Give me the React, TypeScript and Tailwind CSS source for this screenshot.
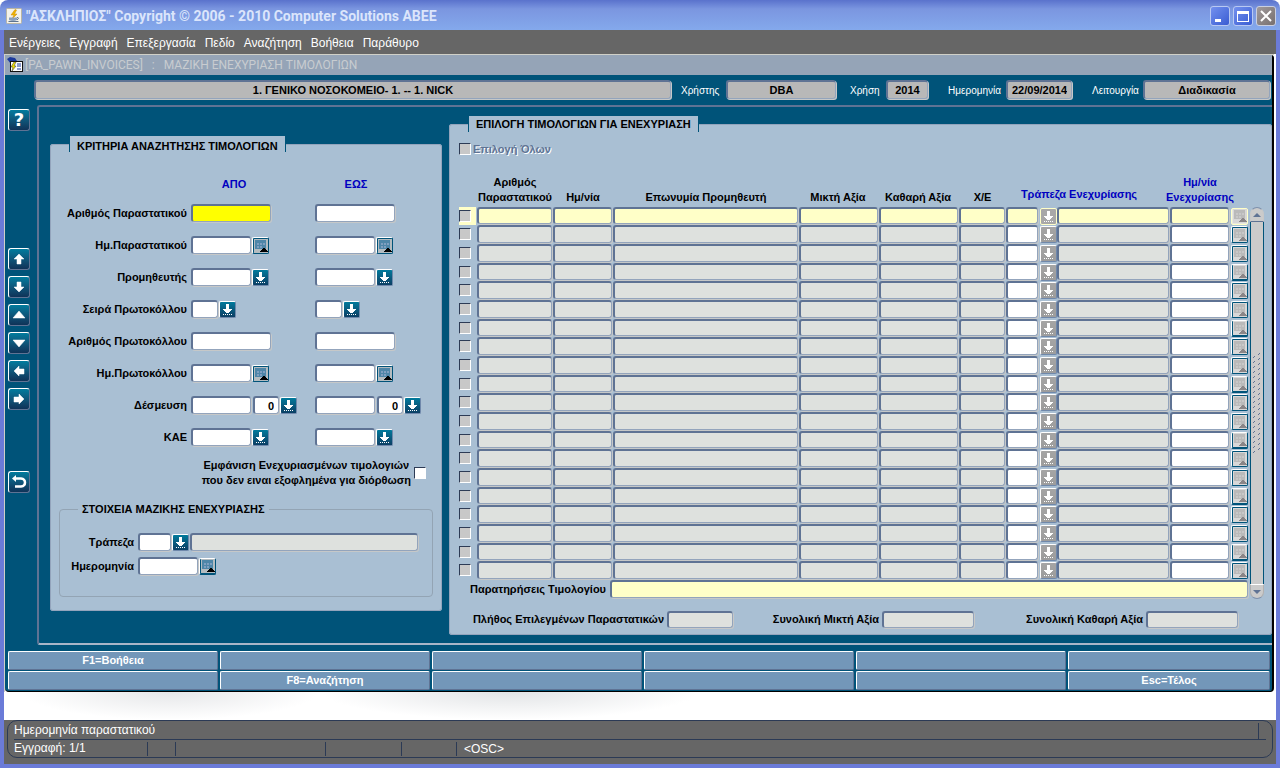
import React, { useState } from 'react';
import clsx from 'clsx';

const ROW_COUNT = 20;

const MENU = ['Ενέργειες', 'Εγγραφή', 'Επεξεργασία', 'Πεδίο', 'Αναζήτηση', 'Βοήθεια', 'Παράθυρο'];

const FUNCTION_KEYS = [
    'F1=Βοήθεια', '', '', '', '', '',
    '', 'F8=Αναζήτηση', '', '', '', 'Esc=Τέλος',
];

type Tone = 'white' | 'active' | 'current' | 'disabled' | 'header';

const TONES: Record<Tone, string> = {
    white: 'bg-white',
    active: 'bg-[#ffff00]',
    current: 'bg-[#ffffc8]',
    disabled: 'bg-[#dee1de]',
    header: 'bg-[#b8b8b8]',
};

interface FieldProps {
    id?: string;
    label?: string;
    tone?: Tone;
    value?: string;
    className?: string;
}

const Field: React.FC<FieldProps> = ({ id, label, tone = 'white', value = '', className }) => (
    <input
        id={id}
        type="text"
        aria-label={label}
        defaultValue={value}
        readOnly={tone === 'disabled' || tone === 'header'}
        className={clsx(
            'mb-px block min-w-0 rounded-[3px] border-2 border-r border-b border-[#5f7394] border-r-[#93a4bc] border-b-[#93a4bc] px-1 font-bold shadow-[1px_1px_0_#c6c8c8] outline-none',
            TONES[tone],
            className
        )}
    />
);

const DownIcon = () => (
    <svg viewBox="0 0 15 15" className="size-[15px]" shapeRendering="crispEdges" aria-hidden="true">
        <path d="M6 2h3v5h3v1h-1v1h-1v1H9v1H6v-1H5V9H4V8H3V7h3z" fill="#fff" />
        <path d="M3 12h1v1H3zM5 12h1v1H5zM7 12h1v1H7zM9 12h1v1H9zM11 12h1v1h-1z" fill="#fff" />
    </svg>
);

const CalendarIcon: React.FC<{ muted?: boolean }> = ({ muted }) => (
    <svg viewBox="0 0 14 14" className="size-[14px]" shapeRendering="crispEdges" aria-hidden="true">
        <rect width="14" height="14" fill={muted ? '#d8d8d8' : '#b4bcc0'} />
        <rect x="1" y="1" width="11" height="9" fill={muted ? '#bababa' : '#4e86a8'} />
        <path
            d="M3 4h2v2H3zM6 4h2v2H6zM9 4h2v2H9zM3 7h2v2H3zM6 7h2v2H6z"
            fill={muted ? '#c8c8c8' : '#7f9fc0'}
        />
        <path d="M9 9h2v1h1v1h1v1h1v1H6v-1h1v-1h1v-1h1z" fill={muted ? '#8a8587' : '#000'} />
    </svg>
);

interface IconButtonProps {
    label: string;
    kind: 'list' | 'date';
    muted?: boolean;
    current?: boolean;
}

const IconButton: React.FC<IconButtonProps> = ({ label, kind, muted, current }) => (
    <button
        type="button"
        aria-label={label}
        className={clsx(
            'flex size-[17px] shrink-0 items-center justify-center rounded-[2px] border border-[#6f88ab]',
            !current && 'border-t-white border-l-white',
            kind === 'list' && !muted && 'bg-linear-to-b from-[#007a9c] to-[#0b3f64]',
            kind === 'list' && muted && !current && 'bg-linear-to-b from-[#a5a5a5] to-[#9c9c9c]',
            kind === 'list' && current && 'border-[#ffffc8] bg-[#a8a8a8]',
            kind === 'date' && !current && 'border-r-[#005379] border-b-[#005379] bg-[#005379]',
            kind === 'date' && current && 'border-[#ffffc8] bg-[#e8e8e0]'
        )}
    >
        {kind === 'list' ? <DownIcon /> : <CalendarIcon muted={muted} />}
    </button>
);

interface CheckProps {
    id?: string;
    label?: string;
    enabled?: boolean;
}

const Check: React.FC<CheckProps> = ({ id, label, enabled }) => (
    <input
        id={id}
        type="checkbox"
        aria-label={label}
        disabled={!enabled}
        className={clsx(
            'block size-[12px] shrink-0 appearance-none border border-white border-t-[#2d3b55] border-l-[#2d3b55]',
            enabled ? 'bg-white' : 'bg-[#c8c8c8]'
        )}
    />
);

const TitleBar = () => (
    <header className="flex h-[30px] items-center rounded-t-lg bg-linear-to-b from-[#5a72cc] via-[#7b96e0] via-30% to-[#84a9ec] pt-[2px] pr-1 pl-[6px]">
        <svg viewBox="0 0 16 16" className="size-4" aria-hidden="true">
            <rect x="0.5" y="0.5" width="15" height="15" rx="1" fill="#f4f2ea" stroke="#b9b5a4" />
            <path d="M9 1.500 5 7h3l-2 4 5-5H8.500l2-4z" fill="#f0b400" stroke="#c98a00" strokeWidth="0.5" />
            <path d="M3 9.500h8v2.500q-4 2-8 0z" fill="#8ba0bd" />
            <path d="M11 9.500q3 0 0 2.500M2.500 13.500h10" fill="none" stroke="#5c7390" />
        </svg>
        <h1 className="ml-1 flex-1 font-[Roboto,sans-serif] text-[14px] leading-4 font-bold text-[#dbe5fb]">
            "ΑΣΚΛΗΠΙΟΣ" Copyright © 2006 - 2010 Computer Solutions ABEE
        </h1>
        <div className="flex gap-[3px]">
            <button type="button" aria-label="Minimize" className="size-5 rounded-[3px] border border-[#b9c9f2] bg-linear-to-br from-[#7390ee] to-[#3a5cd2]">
                <svg viewBox="0 0 18 18" className="size-full" aria-hidden="true"><path d="M4 12h6v3H4z" fill="#fff" /></svg>
            </button>
            <button type="button" aria-label="Maximize" className="size-5 rounded-[3px] border border-[#b9c9f2] bg-linear-to-br from-[#7390ee] to-[#3a5cd2]">
                <svg viewBox="0 0 18 18" className="size-full" aria-hidden="true">
                    <path d="M3 4h12v11H3zM4 7v7h10V7z" fill="#fff" fillRule="evenodd" />
                </svg>
            </button>
            <button type="button" aria-label="Close" className="size-5 rounded-[3px] border border-[#c9cfe0] bg-linear-to-br from-[#a09a9c] to-[#77706f]">
                <svg viewBox="0 0 18 18" className="size-full" aria-hidden="true"><path d="M4 4l10 10M14 4 4 14" stroke="#fff" strokeWidth="2" /></svg>
            </button>
        </div>
    </header>
);

const SIDE_BUTTONS = [
    { label: 'Προηγούμενη εγγραφή', path: 'M10 5l5 5h-3v5H8v-5H5z' },
    { label: 'Επόμενη εγγραφή', path: 'M8 5h4v5h3l-5 5-5-5h3z' },
    { label: 'Προηγούμενη σελίδα', path: 'M10 6l6 7H4z' },
    { label: 'Επόμενη σελίδα', path: 'M4 7h12l-6 7z' },
    { label: 'Αριστερά', path: 'M5 10l5-5v3h5v5h-5v2z' },
    { label: 'Δεξιά', path: 'M15 10l-5-5v3H5v5h5v2z' },
];

const SIDE_BUTTON_CLASS =
    'flex size-[22px] items-center justify-center rounded-[3px] border border-[#5f7394] border-t-white border-l-white bg-linear-to-b from-[#007c9e] to-[#0f3358]';

const SideBar = () => (
    <nav className="flex w-[32px] shrink-0 flex-col pt-[4px] pl-[3px]">
        <button type="button" aria-label="Βοήθεια" className={SIDE_BUTTON_CLASS}>
            <span className="font-['DejaVu_Sans',sans-serif] text-[18px] leading-5 font-bold text-white">?</span>
        </button>
        <div className="mt-[117px] flex flex-col gap-[6px]">
            {SIDE_BUTTONS.map(b => (
                <button key={b.label} type="button" aria-label={b.label} className={SIDE_BUTTON_CLASS}>
                    <svg viewBox="0 0 20 20" className="size-5" aria-hidden="true">
                        <path d={b.path} fill="#fff" stroke="#fff" strokeWidth="0.5" />
                    </svg>
                </button>
            ))}
        </div>
        <button type="button" aria-label="Έξοδος" className={clsx('mt-[61px]', SIDE_BUTTON_CLASS)}>
            <svg viewBox="0 0 20 20" className="size-5" aria-hidden="true">
                <path d="M6 6.500h6q4 .5 4 4t-4 4H6" fill="none" stroke="#fff" strokeWidth="2.500" />
                <path d="M3 6.500 7 3v7z" fill="#fff" />
            </svg>
        </button>
    </nav>
);

const HeaderStrip = () => (
    <div className="flex h-[30px] items-center pr-[2px] pl-[29px] text-[11px]">
        <Field label="Μονάδα" tone="header" value="1. ΓΕΝΙΚΟ ΝΟΣΟΚΟΜΕΙΟ- 1. -- 1. NICK" className="h-[19px] flex-1 text-center" />
        <label htmlFor="hdr-user" className="ml-[10px] w-[45px] text-[10px] text-white">Χρήστης</label>
        <Field id="hdr-user" tone="header" value="DBA" className="h-[19px] w-[110px] text-center" />
        <label htmlFor="hdr-year" className="ml-[14px] w-[36px] text-[10px] text-white">Χρήση</label>
        <Field id="hdr-year" tone="header" value="2014" className="h-[19px] w-[42px] text-center" />
        <label htmlFor="hdr-date" className="ml-[20px] w-[58px] text-[10px] text-white">Ημερομηνία</label>
        <Field id="hdr-date" tone="header" value="22/09/2014" className="h-[19px] w-[66px] px-0 text-center" />
        <label htmlFor="hdr-mode" className="ml-[20px] w-[51px] text-[10px] text-white">Λειτουργία</label>
        <Field id="hdr-mode" tone="header" value="Διαδικασία" className="h-[19px] w-[127px] text-center" />
    </div>
);

interface Criterion {
    label: string;
    width: string;
    kind?: 'list' | 'date';
    counter?: boolean;
}

const CRITERIA: Criterion[] = [
    { label: 'Αριθμός Παραστατικού', width: 'w-20' },
    { label: 'Ημ.Παραστατικού', width: 'w-[60px]', kind: 'date' },
    { label: 'Προμηθευτής', width: 'w-[60px]', kind: 'list' },
    { label: 'Σειρά Πρωτοκόλλου', width: 'w-[27px]', kind: 'list' },
    { label: 'Αριθμός Πρωτοκόλλου', width: 'w-20' },
    { label: 'Ημ.Πρωτοκόλλου', width: 'w-[60px]', kind: 'date' },
    { label: 'Δέσμευση', width: 'w-[60px]', kind: 'list', counter: true },
    { label: 'ΚΑΕ', width: 'w-[60px]', kind: 'list' },
];

const CriteriaPanel = () => (
    <fieldset className="w-[392px] shrink-0 self-start rounded-[3px] border border-[#93a4bc] bg-[#a9bfd3] pb-[13px]">
        <legend className="ml-[18px] h-4 border-x border-[#005379] bg-[#a9bfd3] px-[7px] leading-5">
            ΚΡΙΤΗΡΙΑ ΑΝΑΖΗΤΗΣΗΣ ΤΙΜΟΛΟΓΙΩΝ
        </legend>
        <div className="grid h-[46px] grid-cols-[140px_124px_1fr] items-end pb-[6px] text-[#0000c0]">
            <span />
            <span className="w-[86px] text-center">ΑΠΟ</span>
            <span className="w-[82px] text-center">ΕΩΣ</span>
        </div>
        {CRITERIA.map((c, i) => (
            <div key={c.label} className="grid h-8 grid-cols-[140px_124px_1fr] items-center pb-px">
                <label htmlFor={`criterion-${i}-0`} className="pr-1 text-right">{c.label}</label>
                {['από', 'έως'].map((side, s) => (
                    <div key={side} className="flex items-center gap-px">
                        <Field
                            id={`criterion-${i}-${s}`}
                            label={`${c.label} ${side}`}
                            tone={i === 0 && s === 0 ? 'active' : 'white'}
                            className={clsx('h-[18px]', c.width)}
                        />
                        {c.counter && (
                            <Field
                                label={`${c.label} αριθμός ${side}`}
                                value="0"
                                className="ml-px h-[18px] w-[26px] text-right"
                            />
                        )}
                        {c.kind && <IconButton label={`${c.label} ${side} επιλογή`} kind={c.kind} />}
                    </div>
                ))}
            </div>
        ))}
        <div className="flex items-center justify-end gap-[3px] pt-[4px] pr-[15px]">
            <label htmlFor="show-pledged" className="text-center">
                Εμφάνιση Ενεχυριασμένων τιμολογιών
                <br />
                που δεν ειναι εξοφλημένα για διόρθωση
            </label>
            <Check id="show-pledged" enabled />
        </div>
        <fieldset className="mx-2 mt-[13px] rounded-[4px] border border-[#93a4b4] pb-[18px]">
            <legend className="ml-[18px] h-4 px-1 leading-4">ΣΤΟΙΧΕΙΑ ΜΑΖΙΚΗΣ ΕΝΕΧΥΡΙΑΣΗΣ</legend>
            <div className="mt-[13px] flex h-6 items-center gap-px pr-[14px]">
                <label htmlFor="bank" className="w-[77px] pr-[3px] text-right">Τράπεζα</label>
                <Field id="bank" className="h-[18px] w-[33px]" />
                <IconButton label="Επιλογή τράπεζας" kind="list" />
                <Field label="Ονομασία τράπεζας" tone="disabled" className="h-[18px] flex-1" />
            </div>
            <div className="flex h-6 items-center gap-px">
                <label htmlFor="pledge-date" className="w-[77px] pr-[3px] text-right">Ημερομηνία</label>
                <Field id="pledge-date" className="h-[18px] w-[60px]" />
                <IconButton label="Επιλογή ημερομηνίας" kind="date" />
            </div>
        </fieldset>
    </fieldset>
);

const InvoiceRow: React.FC<{ index: number }> = ({ index }) => {
    const current = index === 0;
    const short = index % 3 === 0;
    const locked: Tone = current ? 'current' : 'disabled';
    const open: Tone = current ? 'current' : 'white';
    const cell = (label: string, tone: Tone) => (
        <td className="p-0 pr-px">
            <Field
                label={`${label} ${index + 1}`}
                tone={tone}
                className={clsx('w-full', short ? 'h-[17px]' : 'h-[18px]')}
            />
        </td>
    );

    return (
        <tr>
            <td className="p-0 pr-px">
                <div className={clsx('flex items-center pb-px', short ? 'h-[18px]' : 'h-[19px]', current && 'bg-[#ffffc8]')}>
                    <Check label={`Επιλογή ${index + 1}`} />
                </div>
            </td>
            {cell('Αριθμός Παραστατικού', locked)}
            {cell('Ημ/νία', locked)}
            {cell('Επωνυμία Προμηθευτή', locked)}
            {cell('Μικτή Αξία', locked)}
            {cell('Καθαρή Αξία', locked)}
            {cell('Χ/Ε', locked)}
            {cell('Κωδικός Τράπεζας', open)}
            <td className="p-0 pl-px">
                <IconButton label={`Επιλογή τράπεζας ${index + 1}`} kind="list" muted current={current} />
            </td>
            {cell('Τράπεζα Ενεχυρίασης', locked)}
            {cell('Ημ/νία Ενεχυρίασης', open)}
            <td className="p-0 pl-px">
                <IconButton label={`Επιλογή ημερομηνίας ${index + 1}`} kind="date" muted current={current} />
            </td>
        </tr>
    );
};

const InvoiceTable = () => (
    <table className="w-full table-fixed border-collapse">
        <colgroup>
            <col className="w-[18px]" />
            <col className="w-[76px]" />
            <col className="w-[60px]" />
            <col />
            <col className="w-[80px]" />
            <col className="w-[80px]" />
            <col className="w-[47px]" />
            <col className="w-[33px]" />
            <col className="w-[18px]" />
            <col className="w-[113px]" />
            <col className="w-[60px]" />
            <col className="w-[18px]" />
        </colgroup>
        <thead>
            <tr className="h-[51px] align-bottom leading-[15px]">
                <td />
                <th className="p-0 pb-[2px]">Αριθμός Παραστατικού</th>
                <th className="p-0 pb-[2px]">Ημ/νία</th>
                <th className="p-0 pb-[2px]">Επωνυμία Προμηθευτή</th>
                <th className="p-0 pr-[2px] pb-[2px]">Μικτή Αξία</th>
                <th className="p-0 pr-[2px] pb-[2px]">Καθαρή Αξία</th>
                <th className="p-0 pb-[2px]">Χ/Ε</th>
                <th colSpan={3} className="p-0 pr-[18px] pb-[5px] text-[#0000c0]">Τράπεζα Ενεχυρίασης</th>
                <th colSpan={2} className="p-0 pr-[18px] pb-[2px] text-[#0000c0]">
                    Ημ/νία
                    <br />
                    <span className="-mx-2">Ενεχυρίασης</span>
                </th>
            </tr>
        </thead>
        <tbody>
            {Array.from({ length: ROW_COUNT }, (_, i) => (
                <InvoiceRow key={i} index={i} />
            ))}
        </tbody>
    </table>
);

const ScrollBar = () => (
    <div className="mt-[51px] flex w-[14px] shrink-0 flex-col">
        <button type="button" aria-label="Κύλιση πάνω" className="flex h-[15px] items-center justify-center rounded-t-full border border-[#c8c8c8] border-t-[#7d90ac] border-b-[#5f7394] bg-[#cbcbcb]">
            <svg viewBox="0 0 8 4" className="h-1 w-2" aria-hidden="true"><path d="M4 0l4 4H0z" fill="#5f7394" /></svg>
        </button>
        <div className="flex flex-1 items-center justify-center border-x border-[#005379] bg-[#cbcbcb]">
            <svg viewBox="0 0 8 100" className="h-[100px] w-2" aria-hidden="true">
                {Array.from({ length: 20 }, (_, i) => (
                    <path key={i} d={`M0 ${i * 5 + 5}l2-2M5 ${i * 5 + 2}l2-2`} stroke="#5f7394" />
                ))}
            </svg>
        </div>
        <button type="button" aria-label="Κύλιση κάτω" className="flex h-[15px] items-center justify-center rounded-b-full border border-[#b0b0b0] border-t-white border-b-[#7d90ac] bg-[#cbcbcb]">
            <svg viewBox="0 0 8 4" className="h-1 w-2" aria-hidden="true"><path d="M0 0h8L4 4z" fill="#5f7394" /></svg>
        </button>
    </div>
);

const InvoicesPanel = () => (
    <fieldset className="min-w-0 flex-1 self-start rounded-[3px] border border-[#93a4bc] bg-[#a9bfd3] pl-[9px]">
        <legend className="ml-[9px] h-4 border-x border-[#005379] bg-[#a9bfd3] px-[7px] leading-4">
            ΕΠΙΛΟΓΗ ΤΙΜΟΛΟΓΙΩΝ ΓΙΑ ΕΝΕΧΥΡΙΑΣΗ
        </legend>
        <div className="mt-[10px] flex h-[14px] items-center gap-[2px]">
            <Check id="select-all" />
            <label htmlFor="select-all" className="text-[#5f7394] [text-shadow:1px_1px_0_#fff]">Επιλογή Όλων</label>
        </div>
        <div className="flex gap-[2px] pr-[7px]">
            <div className="min-w-0 flex-1">
                <InvoiceTable />
                <div className="flex items-center gap-1 pl-[5px]">
                    <label htmlFor="notes" className="w-[142px] text-right">Παρατηρήσεις Τιμολογίου</label>
                    <Field id="notes" tone="current" className="h-[18px] flex-1" />
                </div>
            </div>
            <ScrollBar />
        </div>
        <div className="mt-[11px] mb-[5px] flex h-[19px] items-center pr-[33px] pl-[10px]">
            <div className="flex items-center gap-[3px]">
                <label htmlFor="total-count" className="w-[195px] text-right">Πλήθος Επιλεγμένων Παραστατικών</label>
                <Field id="total-count" tone="disabled" className="h-[17px] w-[66px]" />
            </div>
            <div className="ml-[36px] flex items-center gap-[3px]">
                <label htmlFor="total-gross" className="w-[110px] text-right">Συνολική Μικτή Αξία</label>
                <Field id="total-gross" tone="disabled" className="h-[17px] w-[92px]" />
            </div>
            <div className="ml-auto flex items-center gap-[3px]">
                <label htmlFor="total-net" className="w-[120px] text-right">Συνολική Καθαρή Αξία</label>
                <Field id="total-net" tone="disabled" className="h-[17px] w-[92px]" />
            </div>
        </div>
    </fieldset>
);

const StatusBar = () => (
    <footer className="bg-[#666666] px-[3px] pb-[6px] text-[12px] text-white">
        <div className="rounded-[10px] border border-[#2b3a55] pl-[6px]">
            <div className="mr-[6px] flex h-[19px] items-center justify-between border-b border-[#2b3a55] pt-px">
                <span>Ημερομηνία παραστατικού</span>
                <span className="mr-[7px] h-4 border-l border-[#2b3a55]" />
            </div>
            <div className="flex h-[17px] items-center">
                <span className="w-[133px]">Εγγραφή: 1/1</span>
                <span className="h-[14px] w-[28px] border-l border-[#2b3a55]" />
                <span className="h-[14px] w-[150px] border-l border-[#2b3a55]" />
                <span className="h-[14px] w-[76px] border-l border-[#2b3a55]" />
                <span className="h-[14px] w-[55px] border-l border-[#2b3a55]" />
                <span className="h-[14px] border-l border-[#2b3a55] pl-[7px] leading-[14px]">&lt;OSC&gt;</span>
            </div>
        </div>
    </footer>
);

export default function App() {
    const [pressed, setPressed] = useState('');

    return (
        <div className="flex min-h-screen flex-col bg-white font-['Liberation_Sans',Arial,sans-serif] text-[11px] leading-[15px] text-black">
            <TitleBar />
            <div className="flex flex-1 flex-col border-x-4 border-b-4 border-[#6b7bd8] bg-white">
                <nav className="flex h-6 items-center gap-[9px] bg-[#666666] pt-[2px] pl-[5px] text-[12px] text-white">
                    {MENU.map(item => (
                        <button key={item} type="button">{item}</button>
                    ))}
                </nav>

                <main className="mr-[2px] border-t border-l border-[#d0d0c8]">
                    <div className="rounded-tr-[3px] rounded-b-[4px] border-r-2 border-b border-black bg-[#005379]">
                        <div className="flex h-5 items-center gap-[2px] bg-[#95a4b7] pl-[2px]">
                            <svg viewBox="0 0 16 16" className="size-4" aria-hidden="true">
                                <path d="M0 2l3-2 5 1 2 3v3H4z" fill="#1c3a9c" />
                                <rect x="3.500" y="4.500" width="12" height="10" fill="#fff" stroke="#111" />
                                <path d="M7 5 4 10h2l-1 4 4-5H7l2-4z" fill="#f5e400" stroke="#333" strokeWidth="0.500" />
                                <path d="M10 7h4M10 9h4M10 12h4" stroke="#1c3a9c" />
                            </svg>
                            <h2 className="flex gap-[9px] pt-px font-[Roboto,sans-serif] text-[12px] text-[#c8ccd0]">
                                <span>[PA_PAWN_INVOICES]</span>
                                <span>:</span>
                                <span>ΜΑΖΙΚΗ ΕΝΕΧΥΡΙΑΣΗ ΤΙΜΟΛΟΓΙΩΝ</span>
                            </h2>
                        </div>
                        <HeaderStrip />
                        <div className="flex font-bold">
                            <SideBar />
                            <div className="flex min-w-0 flex-1 gap-[7px] rounded-l-[3px] border-t-2 border-b-2 border-l-2 border-[#5f7394] border-b-[#a9b6c8] pt-[9px] pb-[8px] pl-[11px]">
                                <div className="pt-[20px]">
                                    <CriteriaPanel />
                                </div>
                                <InvoicesPanel />
                            </div>
                        </div>
                        <div className="grid grid-cols-[repeat(5,210px)_1fr] gap-x-[2px] gap-y-px pt-[6px] pr-[2px] pb-[1px] pl-[3px]">
                            {FUNCTION_KEYS.map((key, i) => (
                                <button
                                    key={i}
                                    type="button"
                                    aria-label={key || `Πλήκτρο ${i + 1}`}
                                    aria-pressed={key !== '' && pressed === key}
                                    onClick={() => setPressed(key)}
                                    className="h-[19px] rounded-[2px] border border-[#5f7394] border-t-white border-l-white bg-[#7397b9] font-bold text-white"
                                >
                                    {key}
                                </button>
                            ))}
                        </div>
                    </div>
                </main>

                {/* soft shade under the form */}
                <div className="flex min-h-[28px] flex-1 pl-4">
                    <div className="w-[300px] bg-[radial-gradient(ellipse_at_top,#e6e7e9,#ffffff_70%)]" />
                    <div className="w-[380px] bg-[radial-gradient(ellipse_at_top,#e2e4e6,#ffffff_70%)]" />
                </div>
                <StatusBar />
            </div>
        </div>
    );
}
